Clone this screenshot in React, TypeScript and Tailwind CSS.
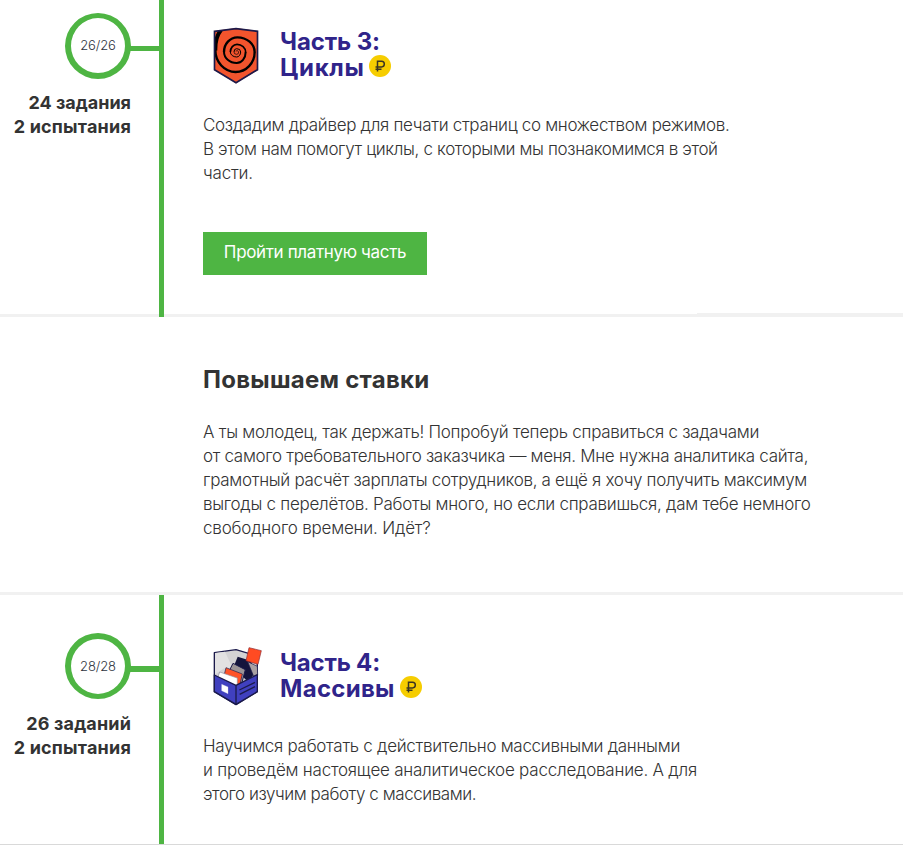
import { ReactNode } from "react";

function Line({ children, className = "" }: { children: ReactNode; className?: string }) {
  return <span className={`block whitespace-nowrap ${className}`}>{children}</span>;
}

function SpiralEmblem() {
  return (
    <svg viewBox="0 0 195 210" className="h-[70px] w-[65px] shrink-0" fill="none">
      <clipPath id="shield">
        <path d="M27 33L93 24L159 33V150L93 190L27 150Z" />
      </clipPath>
      <path d="M27 33L93 24L159 33V150L93 190L27 150Z" fill="#f2542d" />
      <g stroke="#000" clipPath="url(#shield)">
        <path d="M48 30Q30 52 31 92" strokeWidth="12" />
        <path d="M31 90A62 66 0 0 0 92 156A57 60 0 0 0 149 96" strokeWidth="7" />
        <path d="M149 97A52 45 0 0 0 97 52A40 44 0 0 0 57 96" strokeWidth="7" />
        <path d="M57 95A38 34 0 0 0 95 129A27 33 0 0 0 122 96" strokeWidth="6" />
        <path d="M122 97A26 24 0 0 0 96 73A20 23 0 0 0 76 96" strokeWidth="5" />
        <path d="M76 96A19 15 0 0 0 95 111A12 15 0 0 0 107 96A12 10 0 0 0 95 86A8 10 0 0 0 87 96" strokeWidth="3" />
        <path d="M87 96A8 7 0 0 0 95 103A6 7 0 0 0 101 96A6 5 0 0 0 92 93" strokeWidth="2" />
      </g>
      <path d="M28.500 34L93 26L157.500 34V149L93 188L28.500 149Z" stroke="#1b1a4b" strokeWidth="5" />
    </svg>
  );
}

function BoxEmblem() {
  return (
    <svg viewBox="0 0 195 210" className="h-[70px] w-[65px] shrink-0" fill="none" strokeLinejoin="round">
      <path d="M28 35L93 26L157 45V152L93 191L28 152Z" fill="#d3d2d4" stroke="#1b1a4b" strokeWidth="4" />
      <path d="M30 36L60 32L86 88L58 82L30 100Z" fill="#e2e1e2" />
      <path d="M98 47L137 59L152 92L130 122L84 82Z" fill="#14143c" />
      <path d="M128 62L157 76L158 103L146 106Z" fill="#a9a1a3" stroke="#1b1a4b" strokeWidth="2" />
      <path d="M84 67L121 86L110 128L66 103Z" fill="#9c9496" stroke="#1b1a4b" strokeWidth="3" />
      <path d="M63 80L112 99L104 134L55 112Z" fill="#ff5328" stroke="#1b1a4b" strokeWidth="2" />
      <path d="M44 93L97 111V136L38 111Z" fill="#fff" stroke="#8f8d9b" strokeWidth="2" />
      <path d="M28 102L93 133L157 101V152L93 190L28 152Z" fill="#4040bf" stroke="#1b1a4b" strokeWidth="4" />
      <path d="M93 133V190" stroke="#1b1a4b" strokeWidth="4" />
      <path d="M50 130L69 138V158L50 149Z" fill="#fff" stroke="#d5d3e6" strokeWidth="1" />
      <path d="M103 147L150 124M104 160L150 137" stroke="#1b1a4b" strokeWidth="4" />
      <path d="M132 20L169 29L159 70L123 59Z" fill="#ff4b22" stroke="#8c2b35" strokeWidth="2" />
    </svg>
  );
}

function RubleBadge() {
  return (
    <span className="-mt-1 flex size-[22px] items-center justify-center rounded-full bg-[#f6cd00]">
      <svg viewBox="0 0 12 12" className="size-3" fill="none" stroke="#3a3522" strokeWidth="1.500">
        <path d="M3.500 11.500V1.250H7.500A2.600 2.600 0 0 1 7.500 6.900H1.500M1.500 9.200H7.500" />
      </svg>
    </span>
  );
}

interface PartProps {
  emblem: ReactNode;
  titleTop: ReactNode;
  titleBottom: ReactNode;
  progress: string;
  ringClass: string;
  linkClass: string;
  counts: ReactNode;
  leftPad: string;
  rightPad: string;
  height: string;
  edge: string;
  children: ReactNode;
}

function Part(p: PartProps) {
  return (
    <section className={`flex ${p.height}`}>
      <div className={`w-[159px] shrink-0 ${p.leftPad} ${p.edge}`}>
        <div className="flex items-center justify-end">
          <div className={`flex size-[66px] items-center justify-center rounded-full border-[6px] border-[#4eb543] text-[13px] font-light tracking-[-0.1px] text-[#2e3440] ${p.ringClass}`}>
            {p.progress}
          </div>
          <div className={`-ml-px w-[29px] bg-[#4eb543] ${p.linkClass}`} />
        </div>
        <div className="mt-3 pr-7 text-right text-[18px] font-bold leading-6">{p.counts}</div>
      </div>
      <div className="w-[5px] shrink-0 bg-[#4eb543]" />
      <div className={`relative grow pl-[39px] ${p.rightPad} ${p.edge}`}>
        <div className="-ml-px flex h-[69px]">
          <div className="-mt-[9px] ml-[3px]">{p.emblem}</div>
          <h2 className="ml-2.5 text-[24px] font-bold leading-[26px] text-[#30248a]">
            <span className="block">{p.titleTop}</span>
            <span className="flex items-center gap-[5px]">
              {p.titleBottom}
              <RubleBadge />
            </span>
          </h2>
        </div>
        {p.children}
      </div>
    </section>
  );
}

export default function App() {
  return (
    <main className="h-[847px] overflow-hidden bg-white font-['Inter','Liberation_Sans',sans-serif] text-[#333]">
      <Part
        emblem={<SpiralEmblem />}
        titleTop={<span className="tracking-[-0.1px]">Часть 3:</span>}
        titleBottom={<span className="tracking-[0.65px]">Циклы</span>}
        progress="26/26"
        ringClass="border-t-[5px]"
        linkClass="mt-[5px] h-[5px]"
        leftPad="pt-[13px]"
        rightPad="pt-[29px]"
        height="h-[317px]"
        edge="border-b-[3px] border-[#f1f1f1]"
        counts={
          <>
            <Line>24 задания</Line>
            <Line className="tracking-[0.2px]">2 испытания</Line>
          </>
        }
      >
        <p className="mt-[15px] text-[17px] font-light leading-6">
          <Line className="tracking-[-0.31px]">Создадим драйвер для печати страниц со множеством режимов.</Line>
          <Line className="tracking-[-0.36px]">В этом нам помогут циклы, с которыми мы познакомимся в этой</Line>
          <Line className="tracking-[-0.2px]">части.</Line>
        </p>
        <a className="mt-[47px] flex h-[43px] w-[224px] justify-center bg-[#4eb543] pt-2 text-[17px] leading-6 tracking-[-0.35px] whitespace-nowrap text-white">
          Пройти платную часть
        </a>
        <div className="absolute bottom-0 right-0 h-px w-[206px] bg-[#f1f1f1]" />
      </Part>

      <section className="h-[278px] border-b-[3px] border-[#f1f1f1] pl-[203px] pt-[50px]">
        <h2 className="text-[24px] font-bold leading-[26px] tracking-[0.26px]">Повышаем ставки</h2>
        <p className="mt-[27px] text-[17px] font-light leading-6">
          <Line className="tracking-[-0.275px]">А ты молодец, так держать! Попробуй теперь справиться с задачами</Line>
          <Line className="tracking-[-0.31px]">от самого требовательного заказчика — меня. Мне нужна аналитика сайта,</Line>
          <Line className="tracking-[-0.31px]">грамотный расчёт зарплаты сотрудников, а ещё я хочу получить максимум</Line>
          <Line className="tracking-[-0.28px]">выгоды с перелётов. Работы много, но если справишься, дам тебе немного</Line>
          <Line className="tracking-[-0.2px]">свободного времени. Идёт?</Line>
        </p>
      </section>

      <Part
        emblem={<BoxEmblem />}
        titleTop={<span className="tracking-[-0.2px]">Часть 4:</span>}
        titleBottom={<span className="tracking-[0.3px]">Массивы</span>}
        progress="28/28"
        ringClass="border-b-[5px]"
        linkClass="mt-[6px] h-[6px]"
        leftPad="pt-[38px]"
        rightPad="pt-[55px]"
        height="h-[249px]"
        edge=""
        counts={
          <div className="pt-px">
            <Line className="tracking-[0.15px]">26 заданий</Line>
            <Line className="tracking-[0.2px]">2 испытания</Line>
          </div>
        }
      >
        <p className="mt-[15px] text-[17px] font-light leading-6">
          <Line className="tracking-[-0.29px]">Научимся работать с действительно массивными данными</Line>
          <Line className="tracking-[-0.225px]">и проведём настоящее аналитическое расследование. А для</Line>
          <Line className="tracking-[-0.44px]">этого изучим работу с массивами.</Line>
        </p>
      </Part>
      <div className="h-px bg-[#d9d9d9]" />
    </main>
  );
}
